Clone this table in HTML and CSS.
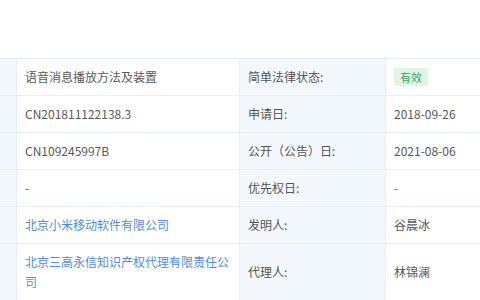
FILE: index.html
```html
<!DOCTYPE html>
<html lang="zh">
<head>
<meta charset="utf-8">
<link rel="stylesheet" href="styles.css">
</head>
<body>
<div class="page">
  <div class="info">
    <div class="cell label"></div>
    <div class="cell value">语音消息播放方法及装置</div>
    <div class="cell label">简单法律状态:</div>
    <div class="cell value"><span class="badge">有效</span></div>

    <div class="cell label"></div>
    <div class="cell value">CN201811122138.3</div>
    <div class="cell label">申请日:</div>
    <div class="cell value">2018-09-26</div>

    <div class="cell label"></div>
    <div class="cell value">CN109245997B</div>
    <div class="cell label">公开（公告）日:</div>
    <div class="cell value">2021-08-06</div>

    <div class="cell label"></div>
    <div class="cell value">-</div>
    <div class="cell label">优先权日:</div>
    <div class="cell value">-</div>

    <div class="cell label"></div>
    <div class="cell value link">北京小米移动软件有限公司</div>
    <div class="cell label">发明人:</div>
    <div class="cell value">谷晨冰</div>

    <div class="cell label"></div>
    <div class="cell value link">北京三高永信知识产权代理有限责任公司</div>
    <div class="cell label">代理人:</div>
    <div class="cell value">林锦澜</div>
  </div>
</div>
</body>
</html>
```
FILE: styles.css
```css
html, body {
  margin: 0;
  padding: 0;
  background: #ffffff;
}
body {
  font-family: "Noto Sans CJK SC", "Noto Sans", sans-serif;
  font-size: 12px;
  color: #595959;
  width: 480px;
  height: 300px;
  overflow: hidden;
}
.page {
  padding-top: 58px;
}
.info {
  display: grid;
  grid-template-columns: 16px 222px 145px 1fr;
  gap: 1px;
  background: #e6eef6;
  border-top: 1px solid #e6eef6;
}
.cell {
  display: flex;
  align-items: center;
  padding: 8px 8px;
  line-height: 20px;
  min-height: 20px;
}
.label {
  background: #f3f8fd;
  color: #555555;
}
.value {
  background: #ffffff;
}
.link {
  color: #4d8ee6;
}
.badge {
  display: inline-block;
  font-size: 11px;
  line-height: 18px;
  height: 18px;
  padding: 0 6px;
  background: #dff6e7;
  color: #3ba56a;
  border-radius: 2px;
}
```
